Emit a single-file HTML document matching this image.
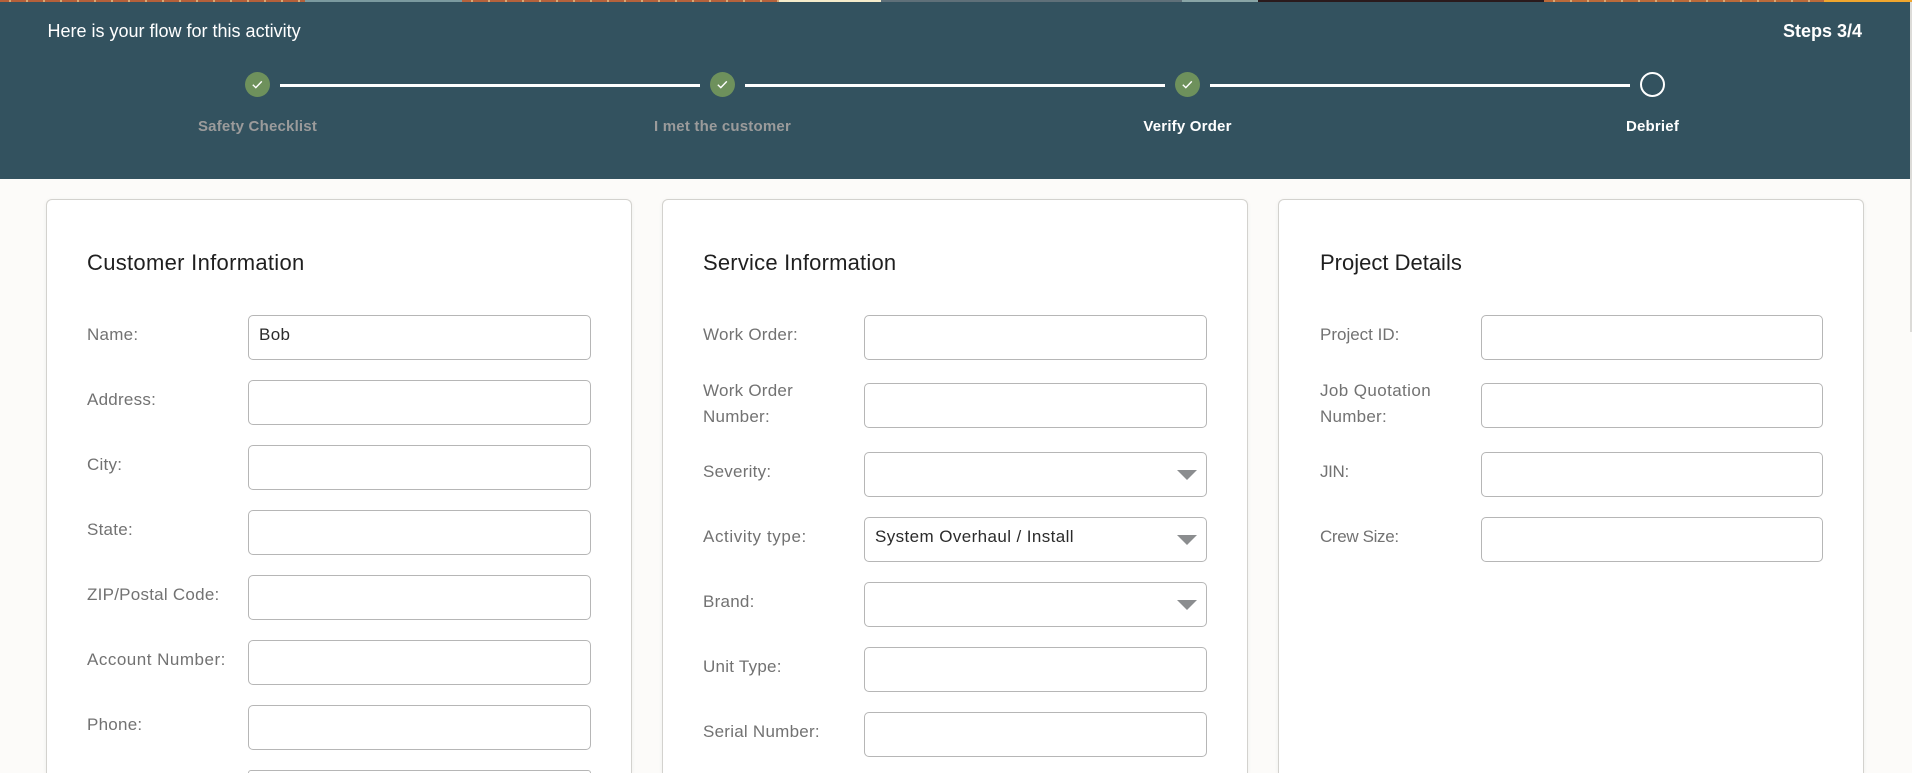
<!DOCTYPE html>
<html lang="en"><head><meta charset="utf-8"><title>Verify Order</title>
<style>
html,body{margin:0;padding:0;width:1912px;height:773px;overflow:hidden;background:#fcfbf9;font-family:"Liberation Sans",sans-serif}
.a{position:absolute}
#root{position:relative;width:1912px;height:773px;overflow:hidden}
.hdr{left:0;top:2px;width:1910px;height:177px;background:#33525f}
.s{top:0;height:2px}
.tick{background-image:repeating-linear-gradient(90deg,transparent 0 9px,#d9a873 9px 11px,transparent 11px 17px)}
.line{top:84px;height:3px;background:#fff;width:420px}
.dot{top:72px;width:25px;height:25px}
.step{top:118px;width:240px;text-align:center;font-size:15px;line-height:18px;font-weight:700;letter-spacing:.2px;color:#9b9b9b;white-space:nowrap}
.card{top:199px;width:584px;height:573px;background:#fff;border:1px solid #d3d2ce;border-bottom:0;border-radius:6px 6px 0 0;box-shadow:0 1px 4px rgba(0,0,0,.06)}
.t{font-size:22px;line-height:26px;letter-spacing:.3px;color:#1f1f1f;white-space:nowrap;top:250px}
.l{font-size:17px;line-height:26px;letter-spacing:.25px;color:#727272;white-space:nowrap}
.i{width:341px;height:43px;border:1px solid #b6b6b6;border-radius:5px;background:#fff}
.w{width:340px}
.v{font-size:17px;line-height:26px;letter-spacing:.35px;color:#2b2b2b;white-space:nowrap}
.ar{width:0;height:0;border-left:10px solid transparent;border-right:10px solid transparent;border-top:10px solid #8b8d8f}
.sb{left:1910px;top:2px;width:2px;height:330px;background:#dcdbd8}
</style></head><body><div id="root">
<div class="a s tick" style="left:0;width:305px;background-color:#b5603a"></div>
<div class="a s" style="left:305px;width:157px;background:#7b9a9f"></div>
<div class="a s tick" style="left:462px;width:317px;background-color:#b5623c"></div>
<div class="a s" style="left:779px;width:102px;background:#f5eccb"></div>
<div class="a s" style="left:881px;width:301px;background:#5f7079"></div>
<div class="a s" style="left:1182px;width:76px;background:#89a5a6"></div>
<div class="a s" style="left:1258px;width:286px;background:#2a1a1c"></div>
<div class="a s tick" style="left:1544px;width:280px;background-color:#bb6a3a"></div>
<div class="a s" style="left:1824px;width:88px;background:#f0a62e"></div>
<div class="a hdr"></div>
<div class="a sb"></div>
<div class="a" style="left:47.5px;top:20px;font-size:18px;line-height:22px;color:#fff;white-space:nowrap">Here is your flow for this activity</div>
<div class="a" style="left:1783px;top:20px;font-size:18px;line-height:22px;font-weight:700;color:#fff;white-space:nowrap">Steps 3/4</div>

<div class="a line" style="left:280px"></div>
<div class="a line" style="left:745px"></div>
<div class="a line" style="left:1210px"></div>
<svg class="a dot" style="left:245px" viewBox="0 0 25 25"><circle cx="12.5" cy="12.5" r="12.5" fill="#6e915c"/><path d="M7.8 12.8l3 2.8 6-6.2" fill="none" stroke="#fff" stroke-width="1.4"/></svg>
<svg class="a dot" style="left:710px" viewBox="0 0 25 25"><circle cx="12.5" cy="12.5" r="12.5" fill="#6e915c"/><path d="M7.8 12.8l3 2.8 6-6.2" fill="none" stroke="#fff" stroke-width="1.4"/></svg>
<svg class="a dot" style="left:1175px" viewBox="0 0 25 25"><circle cx="12.5" cy="12.5" r="12.5" fill="#6e915c"/><path d="M7.8 12.8l3 2.8 6-6.2" fill="none" stroke="#fff" stroke-width="1.4"/></svg>
<svg class="a dot" style="left:1640px" viewBox="0 0 25 25"><circle cx="12.5" cy="12.5" r="11.5" fill="none" stroke="#fff" stroke-width="2"/></svg>
<div class="a step" style="left:137.5px">Safety Checklist</div>
<div class="a step" style="left:602.5px">I met the customer</div>
<div class="a step" style="left:1067.5px;color:#fff">Verify Order</div>
<div class="a step" style="left:1532.5px;color:#fff">Debrief</div>

<div class="a card" style="left:46px"></div>
<div class="a card" style="left:662px"></div>
<div class="a card" style="left:1278px"></div>
<div class="a t" style="left:87px">Customer Information</div>
<div class="a t" style="left:703px;letter-spacing:.2px">Service Information</div>
<div class="a t" style="left:1320px;letter-spacing:0">Project Details</div>

<div class="a l" style="left:87px;top:322px">Name:</div><div class="a i" style="left:248px;top:315px"></div>
<div class="a v" style="left:259px;top:322px">Bob</div>
<div class="a l" style="left:87px;top:387px">Address:</div><div class="a i" style="left:248px;top:380px"></div>
<div class="a l" style="left:87px;top:452px">City:</div><div class="a i" style="left:248px;top:445px"></div>
<div class="a l" style="left:87px;top:517px">State:</div><div class="a i" style="left:248px;top:510px"></div>
<div class="a l" style="left:87px;top:582px">ZIP/Postal Code:</div><div class="a i" style="left:248px;top:575px"></div>
<div class="a l" style="left:87px;top:647px;letter-spacing:.5px">Account Number:</div><div class="a i" style="left:248px;top:640px"></div>
<div class="a l" style="left:87px;top:712px">Phone:</div><div class="a i" style="left:248px;top:705px"></div>
<div class="a i" style="left:248px;top:770px;height:2px;border-bottom:0;border-radius:5px 5px 0 0"></div>

<div class="a l" style="left:703px;top:322px">Work Order:</div><div class="a i" style="left:864px;top:315px"></div>
<div class="a l" style="left:703px;top:378px">Work Order<br>Number:</div><div class="a i" style="left:864px;top:383px"></div>
<div class="a l" style="left:703px;top:459px">Severity:</div><div class="a i" style="left:864px;top:452px"></div><div class="a ar" style="left:1177px;top:470px"></div>
<div class="a l" style="left:703px;top:524px;letter-spacing:.6px">Activity type:</div><div class="a i" style="left:864px;top:517px"></div><div class="a ar" style="left:1177px;top:535px"></div>
<div class="a v" style="left:875px;top:524px;letter-spacing:.4px">System Overhaul / Install</div>
<div class="a l" style="left:703px;top:589px">Brand:</div><div class="a i" style="left:864px;top:582px"></div><div class="a ar" style="left:1177px;top:600px"></div>
<div class="a l" style="left:703px;top:654px">Unit Type:</div><div class="a i" style="left:864px;top:647px"></div>
<div class="a l" style="left:703px;top:719px">Serial Number:</div><div class="a i" style="left:864px;top:712px"></div>

<div class="a l" style="left:1320px;top:322px;letter-spacing:0">Project ID:</div><div class="a i w" style="left:1481px;top:315px"></div>
<div class="a l" style="left:1320px;top:378px;letter-spacing:.4px">Job Quotation<br><span style="letter-spacing:.25px">Number:</span></div><div class="a i w" style="left:1481px;top:383px"></div>
<div class="a l" style="left:1320px;top:459px;letter-spacing:-.35px">JIN:</div><div class="a i w" style="left:1481px;top:452px"></div>
<div class="a l" style="left:1320px;top:524px;letter-spacing:-.35px">Crew Size:</div><div class="a i w" style="left:1481px;top:517px"></div>
</div></body></html>
